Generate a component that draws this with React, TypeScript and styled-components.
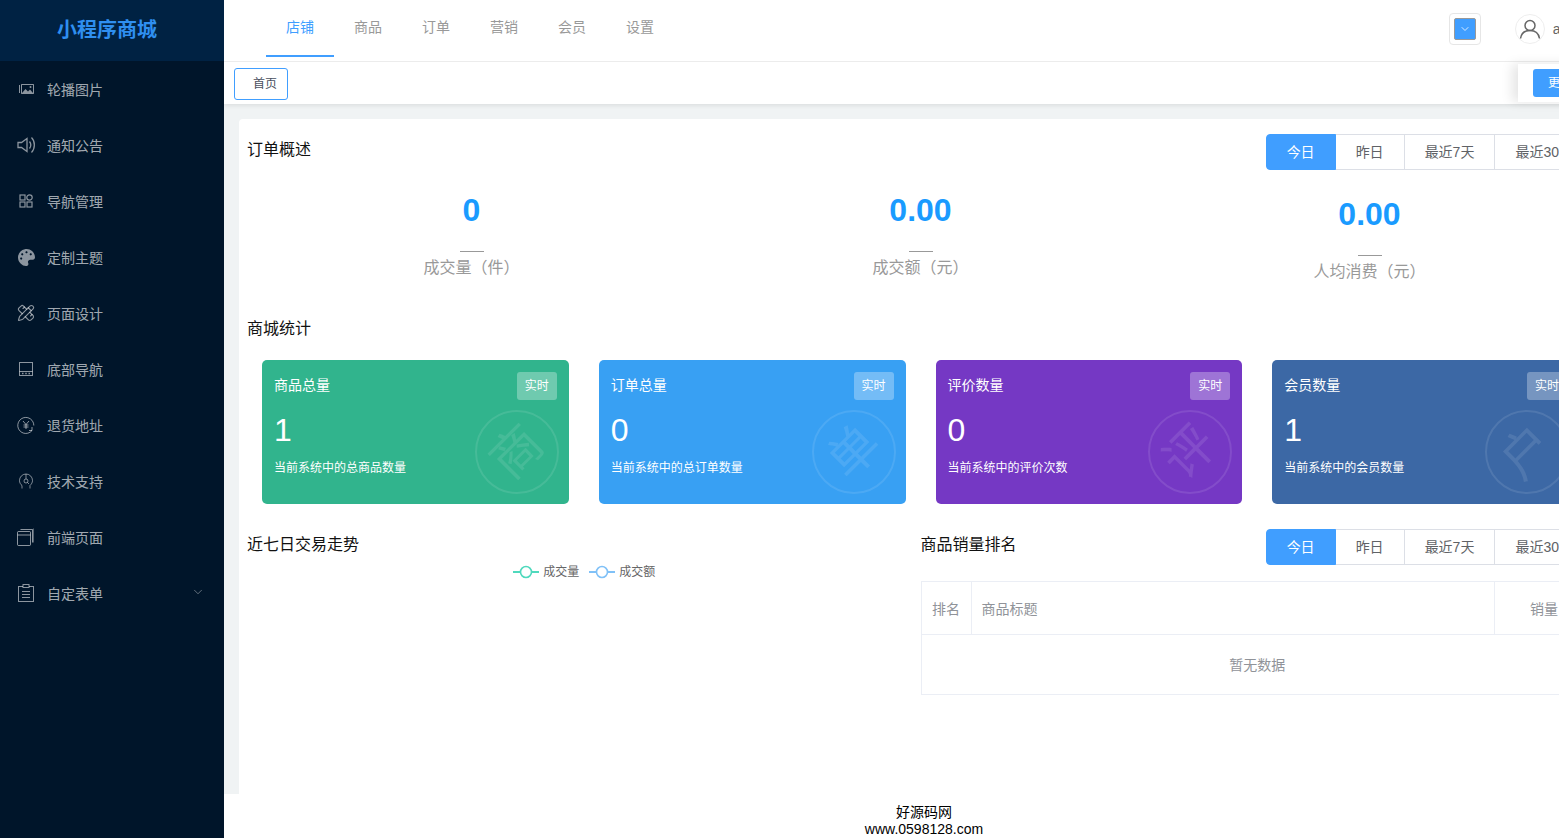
import { ChevronDown, PencilRuler } from "lucide-react";
import { FaPalette } from "react-icons/fa";
import styled, { createGlobalStyle } from "styled-components";

const GlobalStyle = createGlobalStyle`
  * {
    box-sizing: border-box;
  }
  html,
  body {
    margin: 0;
    padding: 0;
    background: #fff;
  }
  body {
    font-family: "Liberation Sans", "Noto Sans CJK SC", sans-serif;
  }
`;

const CarouselIcon = () => (
  <svg width="18" height="18" viewBox="0 0 18 18" fill="none" stroke="currentColor">
    <path d="M2.5 5v8M4.5 4.500h12v9h-12z" />
    <path d="M5 13l3.500-4 2.500 2.500 2-2 3 3.500z" fill="currentColor" stroke="none" />
    <circle cx="13.500" cy="7" r="1" fill="currentColor" stroke="none" />
  </svg>
);

const SpeakerIcon = () => (
  <svg width="20" height="20" viewBox="0 0 20 20" fill="none" stroke="currentColor" strokeWidth="1.300">
    <path d="M2 7.500h3.500L11 3.500v13l-5.500-4H2z" />
    <path d="M13.500 6.500c1.500 2 1.500 5 0 7M15.500 2.500c3.800 3.800 3.800 11.200 0 15" />
  </svg>
);

const AppsIcon = () => (
  <svg width="16" height="16" viewBox="0 0 16 16" fill="none" stroke="currentColor" strokeWidth="1.200">
    <rect x="2" y="2" width="5" height="5" />
    <circle cx="11.500" cy="4.500" r="2.700" />
    <rect x="2" y="9" width="5" height="5" />
    <rect x="9" y="9" width="5" height="5" />
  </svg>
);

const BottomNavIcon = () => (
  <svg width="16" height="16" viewBox="0 0 16 16" fill="none" stroke="currentColor">
    <rect x="1.500" y="1.500" width="13" height="13" />
    <path d="M1.500 10.500h13" />
    <path d="M4 12.500h1.500M7.250 12.500h1.500M10.500 12.500H12" strokeWidth="1.300" />
  </svg>
);

const ReturnIcon = () => (
  <svg width="18" height="18" viewBox="0 0 18 18" fill="none" stroke="currentColor">
    <path d="M15 14.500A8 8 0 1 1 16.800 9.500" />
    <path d="M6 5l3 3.500L12 5M9 8.500V13M6.500 9h5M6.500 11h5" />
    <path d="M15 11v3.500h-3" />
  </svg>
);

const SupportIcon = () => (
  <svg width="16" height="18" viewBox="0 0 16 18" fill="none" stroke="currentColor" strokeWidth="0.900">
    <path d="M4 16.500v-3C2.500 12.500 1.500 10.500 1.500 8.500a6.500 6.500 0 0 1 13 0c0 2-1 3.500-2.500 5v3" />
    <circle cx="8" cy="9" r="2" />
    <path d="M9.500 10.500l1.500 1.500M8 2v5" />
  </svg>
);

const PagesIcon = () => (
  <svg width="18" height="18" viewBox="0 0 18 18" fill="none" stroke="currentColor">
    <rect x="0.500" y="3.500" width="13" height="14" rx="1" />
    <path d="M0.500 7h13M3.500 1.500h12v13" />
    <path d="M16.500 0.500v14" opacity="0.6" />
  </svg>
);

const FormIcon = () => (
  <svg width="16" height="18" viewBox="0 0 16 18" fill="none" stroke="currentColor">
    <rect x="0.500" y="2.500" width="15" height="15" />
    <rect x="5" y="0.500" width="6" height="3" fill="#00152a" />
    <path d="M4 7.500h8M4 10.500h8M4 13.500h8" />
  </svg>
);

const UserIcon = () => (
  <svg width="22" height="22" viewBox="0 0 22 22" fill="none" stroke="#666" strokeWidth="1.500">
    <circle cx="11" cy="7.500" r="5" />
    <path d="M1.500 20.500c.8-5 4.500-8 9.500-8s8.700 3 9.500 8" />
  </svg>
);

const LegendMark = ({ color }: { color: string }) => (
  <LegendSvg width="26" height="14" viewBox="0 0 26 14" fill="none" stroke={color} strokeWidth="2">
    <path d="M0 7h7M19 7h7" />
    <circle cx="13" cy="7" r="5.500" strokeWidth="1.600" fill="#fff" />
  </LegendSvg>
);

const menu = [
  { label: "轮播图片", icon: <CarouselIcon /> },
  { label: "通知公告", icon: <SpeakerIcon /> },
  { label: "导航管理", icon: <AppsIcon /> },
  { label: "定制主题", icon: <FaPalette size={17} /> },
  { label: "页面设计", icon: <PencilRuler size={18} strokeWidth={1.5} /> },
  { label: "底部导航", icon: <BottomNavIcon /> },
  { label: "退货地址", icon: <ReturnIcon /> },
  { label: "技术支持", icon: <SupportIcon /> },
  { label: "前端页面", icon: <PagesIcon /> },
  { label: "自定表单", icon: <FormIcon />, more: true },
];

const tabs = ["店铺", "商品", "订单", "营销", "会员", "设置"];
const ranges = ["今日", "昨日", "最近7天", "最近30天"];

const stats = [
  { value: "0", label: "成交量（件）" },
  { value: "0.00", label: "成交额（元）" },
  { value: "0.00", label: "人均消费（元）", low: true },
];

const cards = [
  { title: "商品总量", value: "1", desc: "当前系统中的总商品数量", mark: "商", color: "#31b48d" },
  { title: "订单总量", value: "0", desc: "当前系统中的总订单数量", mark: "单", color: "#38a0f3" },
  { title: "评价数量", value: "0", desc: "当前系统中的评价次数", mark: "评", color: "#7538c4" },
  { title: "会员数量", value: "1", desc: "当前系统中的会员数量", mark: "户", color: "#3c68a5" },
];

const RangeButtons = () => (
  <RangeGroup>
    {ranges.map((range, i) => (
      <RangeButton key={range} $active={i === 0}>
        {range}
      </RangeButton>
    ))}
  </RangeGroup>
);

const App = () => {
  return (
    <Page>
      <GlobalStyle />
      <Sidebar>
        <Logo>小程序商城</Logo>
        {menu.map((item) => (
          <MenuItem key={item.label}>
            <MenuIcon>{item.icon}</MenuIcon>
            <span>{item.label}</span>
            {item.more && (
              <MenuArrow>
                <ChevronDown size={14} strokeWidth={1.2} />
              </MenuArrow>
            )}
          </MenuItem>
        ))}
      </Sidebar>

      <Main>
        <Header>
          <Tabs>
            {tabs.map((tab, i) => (
              <Tab key={tab} $active={i === 0}>
                {tab}
              </Tab>
            ))}
          </Tabs>
          <HeaderRight>
            <ThemeBox>
              <ThemeSwatch>
                <ChevronDown size={12} strokeWidth={2} />
              </ThemeSwatch>
            </ThemeBox>
            <Avatar>
              <UserIcon />
            </Avatar>
            <UserName>admin</UserName>
          </HeaderRight>
        </Header>

        <TagBar>
          <Tag>首页</Tag>
          <TagActions>
            <MoreButton>更多操作</MoreButton>
          </TagActions>
        </TagBar>

        <Content>
          <Panel>
            <SectionHead>
              <SectionTitle>订单概述</SectionTitle>
              <RangeButtons />
            </SectionHead>

            <StatRow>
              {stats.map((stat) => (
                <Stat key={stat.label} $low={stat.low}>
                  <StatValue>{stat.value}</StatValue>
                  <StatDash />
                  <StatLabel>{stat.label}</StatLabel>
                </Stat>
              ))}
            </StatRow>

            <SectionTitle>商城统计</SectionTitle>
            <CardGrid>
              {cards.map((card) => (
                <Card key={card.title} $color={card.color}>
                  <CardTop>
                    <CardTitle>{card.title}</CardTitle>
                    <Badge>实时</Badge>
                  </CardTop>
                  <CardValue>{card.value}</CardValue>
                  <CardDesc>{card.desc}</CardDesc>
                  <Watermark>
                    <span>{card.mark}</span>
                  </Watermark>
                </Card>
              ))}
            </CardGrid>

            <Columns>
              <div>
                <SectionTitle>近七日交易走势</SectionTitle>
                <Legend>
                  <LegendItem>
                    <LegendMark color="#4fd9bd" />
                    成交量
                  </LegendItem>
                  <LegendItem>
                    <LegendMark color="#80c1f7" />
                    成交额
                  </LegendItem>
                </Legend>
              </div>
              <div>
                <SectionHead>
                  <SectionTitle>商品销量排名</SectionTitle>
                  <RangeButtons />
                </SectionHead>
                <RankTable>
                  <thead>
                    <tr>
                      <RankHead $width={50} $align="center">
                        排名
                      </RankHead>
                      <RankHead $align="left">商品标题</RankHead>
                      <RankHead $width={99} $align="center">
                        销量
                      </RankHead>
                    </tr>
                  </thead>
                  <tbody>
                    <tr>
                      <EmptyCell colSpan={3}>暂无数据</EmptyCell>
                    </tr>
                  </tbody>
                </RankTable>
              </div>
            </Columns>
          </Panel>
        </Content>

        <Footer>
          <div>好源码网</div>
          <div>www.0598128.com</div>
        </Footer>
      </Main>
    </Page>
  );
};

export default App;

const Page = styled.div`
  display: flex;
  width: 100vw;
  height: 100vh;
  overflow: hidden;
`;

const Sidebar = styled.aside`
  flex: none;
  width: 224px;
  background-color: #00152a;
`;

const Logo = styled.div`
  display: flex;
  justify-content: center;
  align-items: center;
  height: 61px;
  padding: 0 10px 4px 0;
  font-size: 20px;
  font-weight: 700;
  color: #2f8ff0;
  background-color: #002243;
`;

const MenuItem = styled.div`
  position: relative;
  display: flex;
  align-items: center;
  height: 56px;
  padding-left: 16px;
  font-size: 14px;
  color: rgba(255, 255, 255, 0.65);
`;

const MenuIcon = styled.span`
  display: flex;
  justify-content: center;
  align-items: center;
  width: 20px;
  margin-right: 11px;
  color: rgba(255, 255, 255, 0.55);
`;

const MenuArrow = styled.span`
  display: flex;
  margin-left: auto;
  margin-right: 19px;
  margin-top: -3px;
  color: rgba(255, 255, 255, 0.55);
`;

const Main = styled.main`
  flex: none;
  display: flex;
  flex-direction: column;
  width: 1400px;
  height: 100%;
`;

const Header = styled.header`
  flex: none;
  display: flex;
  justify-content: space-between;
  height: 62px;
  padding: 0 33px 0 42px;
  border-bottom: 1px solid #eeeeee;
`;

const Tabs = styled.nav`
  display: flex;
  height: 57px;
`;

const Tab = styled.div<{ $active?: boolean }>`
  width: 68px;
  line-height: 55px;
  text-align: center;
  font-size: 14px;
  color: ${(p) => (p.$active ? "#409eff" : "#999")};
  border-bottom: 2px solid ${(p) => (p.$active ? "#409eff" : "transparent")};
`;

const HeaderRight = styled.div`
  display: flex;
  align-items: center;
  height: 58px;
`;

const ThemeBox = styled.div`
  display: flex;
  justify-content: center;
  align-items: center;
  width: 32px;
  height: 32px;
  margin-right: 34px;
  border: 1px solid #e6e6e6;
  border-radius: 4px;
`;

const ThemeSwatch = styled.div`
  display: flex;
  justify-content: center;
  align-items: center;
  width: 22px;
  height: 22px;
  color: #d9ecff;
  background-color: #409eff;
  border: 1px solid #999;
  border-radius: 2px;
`;

const Avatar = styled.div`
  display: flex;
  justify-content: center;
  align-items: center;
  width: 30px;
  height: 30px;
  margin-right: 8px;
  border: 1px solid #eeeeee;
  border-radius: 50%;
`;

const UserName = styled.span`
  font-size: 14px;
  color: #666;
`;

const TagBar = styled.div`
  position: relative;
  z-index: 1;
  flex: none;
  display: flex;
  justify-content: space-between;
  height: 42px;
  padding: 6px 0 0 10px;
  background-color: #fff;
  box-shadow: 0 2px 4px rgba(0, 0, 0, 0.08);
`;

const Tag = styled.div`
  display: flex;
  align-items: center;
  width: 54px;
  height: 32px;
  padding: 0 0 3px 18px;
  font-size: 12px;
  color: #495060;
  border: 1px solid #409eff;
  border-radius: 3px;
`;

const TagActions = styled.div`
  display: flex;
  width: 106px;
  height: 38px;
  margin-top: -4px;
  padding: 5px 0 0 15px;
  background-color: #fff;
  box-shadow: -6px 0 12px rgba(0, 0, 0, 0.1);
`;

const MoreButton = styled.div`
  width: 78px;
  height: 28px;
  line-height: 28px;
  text-align: center;
  font-size: 12px;
  color: #fff;
  background-color: #409eff;
  border-radius: 3px;
`;

const Content = styled.div`
  flex: 1;
  min-height: 0;
  padding: 15px 15px 0;
  background-color: #f0f3f4;
`;

const Panel = styled.section`
  width: 1363px;
  height: 100%;
  padding: 15px 8px 0;
  background-color: #fff;
  border-radius: 4px 4px 0 0;
`;

const SectionHead = styled.div`
  display: flex;
  justify-content: space-between;
  align-items: flex-start;
`;

const SectionTitle = styled.div`
  font-size: 16px;
  line-height: 32px;
  color: #111;
`;

const RangeGroup = styled.div`
  display: flex;
`;

const RangeButton = styled.div<{ $active?: boolean }>`
  position: relative;
  z-index: ${(p) => (p.$active ? 1 : 0)};
  height: 36px;
  margin-left: -1px;
  padding: 0 20px;
  line-height: 34px;
  font-size: 14px;
  color: ${(p) => (p.$active ? "#fff" : "#606266")};
  background-color: ${(p) => (p.$active ? "#409eff" : "#fff")};
  border: 1px solid ${(p) => (p.$active ? "#409eff" : "#dcdfe6")};

  &:first-child {
    border-radius: 4px 0 0 4px;
  }
`;

const StatRow = styled.div`
  display: grid;
  grid-template-columns: repeat(3, 1fr);
  align-items: start;
  padding-top: 20px;
  margin-bottom: 29px;
`;

const Stat = styled.div<{ $low?: boolean }>`
  display: flex;
  flex-direction: column;
  align-items: center;
  padding-top: ${(p) => (p.$low ? "4px" : "0")};
`;

const StatValue = styled.div`
  font-size: 32px;
  font-weight: 700;
  line-height: 40px;
  color: #1a9bff;
`;

const StatDash = styled.div`
  width: 24px;
  height: 1px;
  margin: 21px 0 4px;
  background-color: #999;
`;

const StatLabel = styled.div`
  font-size: 16px;
  line-height: 24px;
  color: #999;
`;

const CardGrid = styled.div`
  display: grid;
  grid-template-columns: repeat(4, 1fr);
  gap: 30px;
  margin-top: 15px;
  padding: 0 15px;
`;

const Card = styled.div<{ $color: string }>`
  position: relative;
  height: 144px;
  padding: 12px;
  overflow: hidden;
  color: #fff;
  background-color: ${(p) => p.$color};
  border-radius: 5px;
`;

const CardTop = styled.div`
  display: flex;
  justify-content: space-between;
  align-items: flex-start;
`;

const CardTitle = styled.div`
  font-size: 14px;
  line-height: 26px;
`;

const Badge = styled.div`
  width: 40px;
  height: 28px;
  line-height: 28px;
  text-align: center;
  font-size: 12px;
  background-color: rgba(255, 255, 255, 0.3);
  border-radius: 3px;
`;

const CardValue = styled.div`
  margin-top: 10px;
  font-size: 32px;
  line-height: 40px;
`;

const CardDesc = styled.div`
  margin-top: 9px;
  font-size: 12px;
  line-height: 18px;
`;

const Watermark = styled.div`
  position: absolute;
  right: 10px;
  bottom: 10px;
  display: flex;
  justify-content: center;
  align-items: center;
  width: 84px;
  height: 84px;
  font-size: 50px;
  line-height: 1;
  color: rgba(255, 255, 255, 0.1);
  border: 2px solid rgba(255, 255, 255, 0.1);
  border-radius: 50%;

  span {
    transform: rotate(-45deg);
  }
`;

const Columns = styled.div`
  display: grid;
  grid-template-columns: 1fr 1fr;
  margin-top: 25px;
`;

const Legend = styled.div`
  display: flex;
  justify-content: center;
  align-items: center;
  gap: 10px;
  height: 18px;
  padding-left: 1px;
`;

const LegendItem = styled.div`
  display: flex;
  align-items: center;
  gap: 4px;
  font-size: 12px;
  color: #666;
`;

const LegendSvg = styled.svg`
  margin-top: 4px;
`;

const RankTable = styled.table`
  width: 100%;
  margin-top: 16px;
  table-layout: fixed;
  border-collapse: collapse;
  border: 1px solid #ebeef5;
`;

const RankHead = styled.th<{ $width?: number; $align: string }>`
  width: ${(p) => (p.$width ? `${p.$width}px` : "auto")};
  height: 53px;
  padding: 0 10px;
  text-align: ${(p) => p.$align};
  font-size: 14px;
  font-weight: 400;
  color: #909399;
  border: 1px solid #ebeef5;
`;

const EmptyCell = styled.td`
  height: 60px;
  padding-bottom: 3px;
  text-align: center;
  font-size: 14px;
  color: #909399;
`;

const Footer = styled.footer`
  flex: none;
  height: 44px;
  padding-top: 10px;
  text-align: center;
  font-size: 14px;
  line-height: 17px;
  color: #000;
`;
